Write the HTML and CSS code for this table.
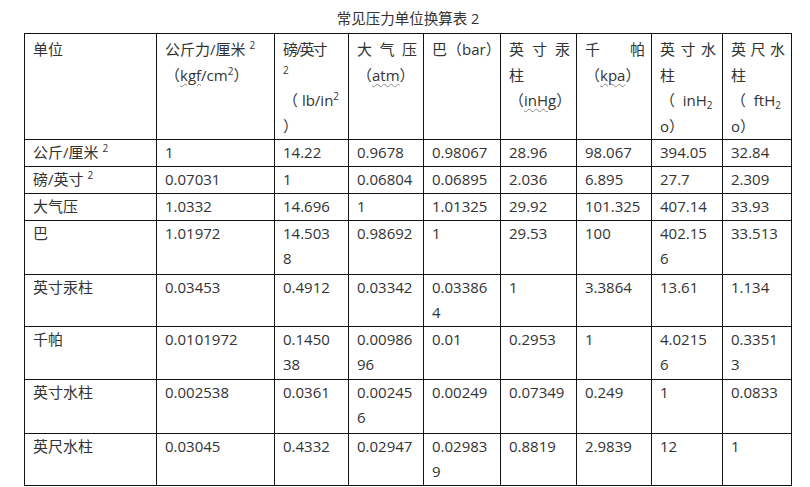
FILE: index.html
```html
<!DOCTYPE html>
<html lang="zh">
<head>
<meta charset="utf-8">
<title>常见压力单位换算表 2</title>
<link rel="stylesheet" href="styles.css">
</head>
<body>
<div class="page">
  <div class="title">常见压力单位换算表 2</div>
  <table class="tbl">
    <colgroup>
      <col class="c1"><col class="c2"><col class="c3"><col class="c4"><col class="c5"><col class="c6"><col class="c7"><col class="c8"><col class="c9">
    </colgroup>
    <tr class="hrow">
      <td>单位</td>
      <td>公斤力/厘米 <sup>2</sup><br>（<span class="sq">kgf</span>/cm<sup>2</sup>）</td>
      <td><span class="tight">磅/英寸</span><br><span class="lonesup">2</span><br>（ lb/in<sup>2</sup><br>）</td>
      <td><span class="jl">大气压</span>（<span class="sq">atm</span>）</td>
      <td>巴（bar）</td>
      <td><span class="jl">英寸汞</span>柱<br>（<span class="sq">inHg</span>）</td>
      <td><span class="jl">千帕</span>（<span class="sq">kpa</span>）</td>
      <td><span class="jl">英寸水</span>柱<br>（&nbsp; inH<sub>2</sub><br>o）</td>
      <td><span class="jl">英尺水</span>柱<br>（&nbsp; ftH<sub>2</sub><br>o）</td>
    </tr>
    <tr class="r26">
      <td>公斤/厘米 <sup>2</sup></td><td>1</td><td>14.22</td><td>0.9678</td><td>0.98067</td><td>28.96</td><td>98.067</td><td>394.05</td><td>32.84</td>
    </tr>
    <tr class="r27">
      <td>磅/英寸 <sup>2</sup></td><td>0.07031</td><td>1</td><td>0.06804</td><td>0.06895</td><td>2.036</td><td>6.895</td><td>27.7</td><td>2.309</td>
    </tr>
    <tr class="r27">
      <td>大气压</td><td>1.0332</td><td>14.696</td><td>1</td><td>1.01325</td><td>29.92</td><td>101.325</td><td>407.14</td><td>33.93</td>
    </tr>
    <tr class="r54">
      <td>巴</td><td>1.01972</td><td>14.503<br>8</td><td>0.98692</td><td>1</td><td>29.53</td><td>100</td><td>402.15<br>6</td><td>33.513</td>
    </tr>
    <tr class="r52">
      <td>英寸汞柱</td><td>0.03453</td><td>0.4912</td><td>0.03342</td><td>0.03386<br>4</td><td>1</td><td>3.3864</td><td>13.61</td><td>1.134</td>
    </tr>
    <tr class="r53">
      <td>千帕</td><td>0.0101972</td><td>0.1450<br>38</td><td>0.00986<br>96</td><td>0.01</td><td>0.2953</td><td>1</td><td>4.0215<br>6</td><td>0.3351<br>3</td>
    </tr>
    <tr class="r54">
      <td>英寸水柱</td><td>0.002538</td><td>0.0361</td><td>0.00245<br>6</td><td>0.00249</td><td>0.07349</td><td>0.249</td><td>1</td><td>0.0833</td>
    </tr>
    <tr class="r51">
      <td>英尺水柱</td><td>0.03045</td><td>0.4332</td><td>0.02947</td><td>0.02983<br>9</td><td>0.8819</td><td>2.9839</td><td>12</td><td>1</td>
    </tr>
  </table>
</div>
</body>
</html>
```
FILE: styles.css
```css
html, body {
  margin: 0;
  padding: 0;
  background: #ffffff;
}
body {
  font-family: "Open Sans", "Noto Sans CJK SC", sans-serif;
  color: #333333;
}
.page {
  padding-left: 24px;
  width: 768px;
}
.title {
  text-align: center;
  font-size: 14.5px;
  line-height: 20px;
  padding-top: 9px;
  margin-bottom: 4px;
  color: #333333;
}
.tbl {
  border-collapse: collapse;
  table-layout: fixed;
  width: 768px;
}
.c1 { width: 132px; }
.c2 { width: 118px; }
.c3 { width: 74px; }
.c4 { width: 75px; }
.c5 { width: 77px; }
.c6 { width: 76px; }
.c7 { width: 75px; }
.c8 { width: 71px; }
.c9 { width: 69px; }
.tbl td {
  border: 1px solid #111111;
  vertical-align: top;
  padding: 0 6px 0 8px;
  font-size: 15px;
  line-height: 25.5px;
  white-space: nowrap;
}
.hrow { height: 105px; }
.hrow td { padding-top: 3px; }
.r26 { height: 26px; }
.r27 { height: 27px; }
.r51 { height: 51px; }
.r52 { height: 52px; }
.r53 { height: 53px; }
.r54 { height: 54px; }
sup {
  font-size: 10px;
  line-height: 0;
  vertical-align: 6px;
}
sub {
  font-size: 10px;
  line-height: 0;
  vertical-align: -3px;
}
.lonesup {
  font-size: 10px;
  display: inline-block;
  vertical-align: 7px;
  line-height: 10px;
}
.jl {
  display: block;
  white-space: normal;
  text-align: justify;
  text-align-last: justify;
}
.tight {
  letter-spacing: -2px;
}
.sq {
  text-decoration: underline wavy #8a8a8a;
  text-decoration-thickness: 1px;
  text-underline-offset: 2px;
}
```
